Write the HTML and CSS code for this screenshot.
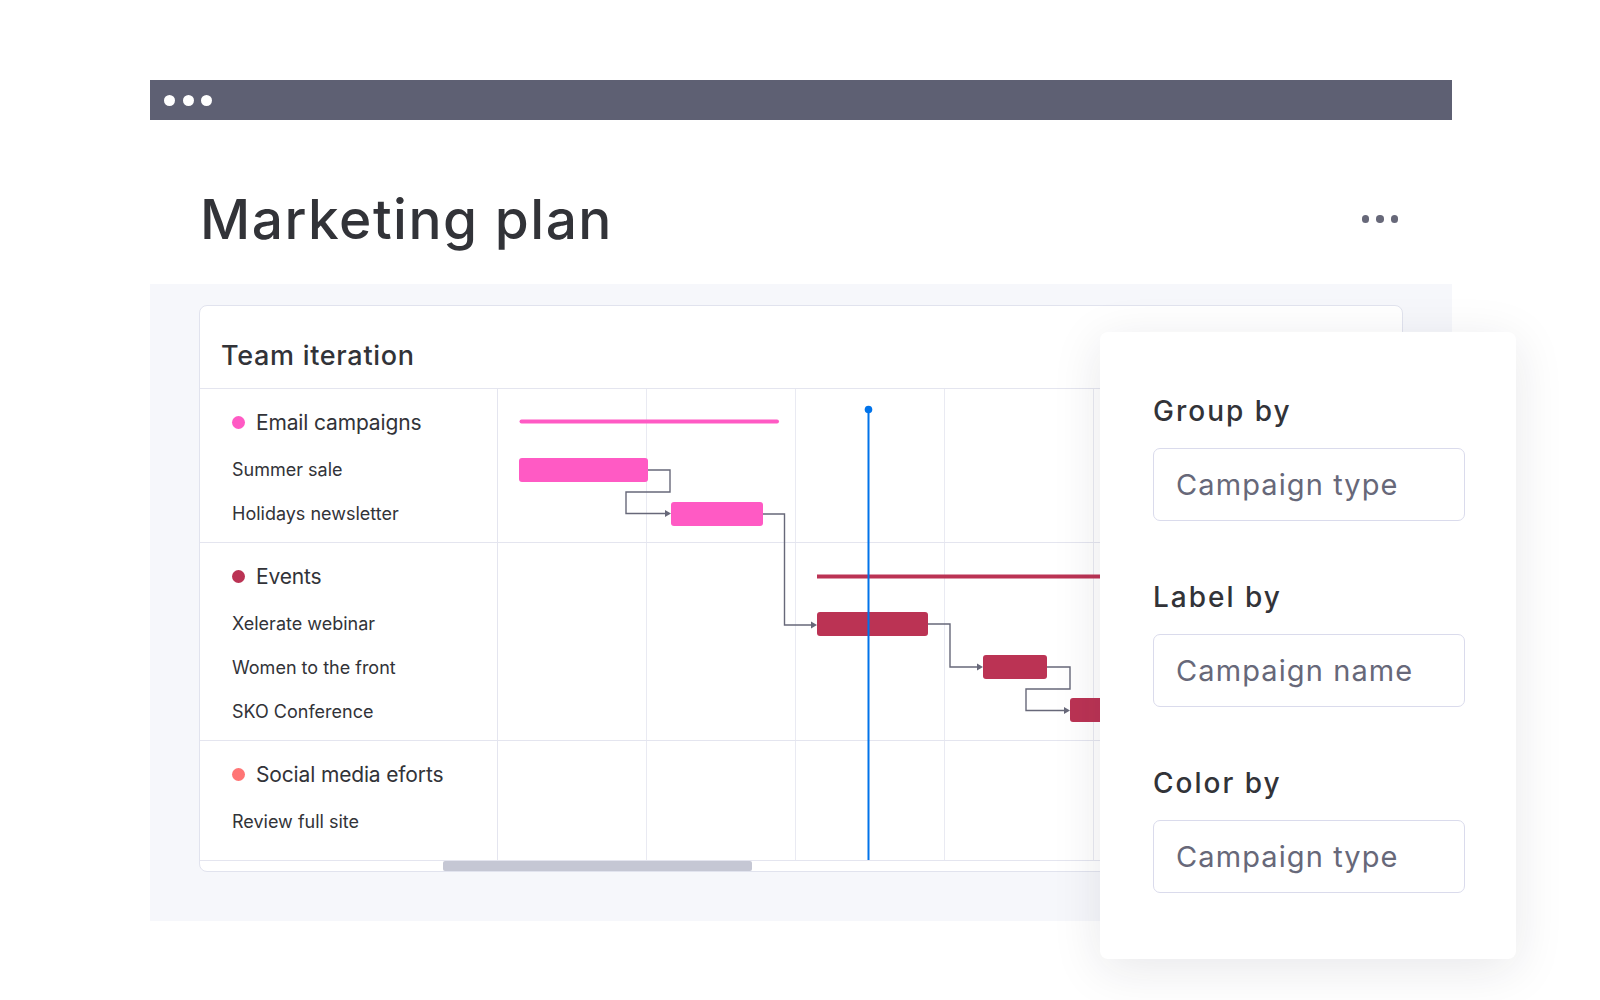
FILE: index.html
```html
<!DOCTYPE html>
<html lang="en">
<head>
    <meta charset="UTF-8">
    <meta name="viewport" content="width=device-width, initial-scale=1.0">
    <title>Marketing plan</title>
    <link rel="stylesheet" href="styles.css">
</head>
<body>
<div class="page">

    <div class="window">
        <div class="window-bar">
            <span></span><span></span><span></span>
        </div>

        <div class="board-head">
            <h1>Marketing plan</h1>
            <div class="more"><span></span><span></span><span></span></div>
        </div>

        <div class="board">
            <div class="card">
                <div class="card-head">Team iteration</div>

                <div class="gantt">
                    <div class="group">
                        <div class="labels">
                            <div class="group-name"><span class="bullet pink"></span>Email campaigns</div>
                            <div class="item">Summer sale</div>
                            <div class="item">Holidays newsletter</div>
                        </div>
                        <div class="timeline"></div>
                    </div>
                    <div class="group group-events">
                        <div class="labels">
                            <div class="group-name"><span class="bullet crimson"></span>Events</div>
                            <div class="item">Xelerate webinar</div>
                            <div class="item">Women to the front</div>
                            <div class="item">SKO Conference</div>
                        </div>
                        <div class="timeline"></div>
                    </div>
                    <div class="group group-social">
                        <div class="labels">
                            <div class="group-name"><span class="bullet coral"></span>Social media eforts</div>
                            <div class="item">Review full site</div>
                        </div>
                        <div class="timeline"></div>
                    </div>

                    <!-- bars, dependencies and the today marker -->
                    <svg class="bars" width="906" height="471" viewBox="0 0 906 471">
                        <line x1="24.5" y1="32.5" x2="280" y2="32.5" stroke="#ff5ac4" stroke-width="4" stroke-linecap="round"/>
                        <rect x="22" y="69" width="129" height="24" rx="3" fill="#ff5ac4"/>
                        <path d="M151 81H173V103H129V124.5H168" fill="none" stroke="#676879" stroke-width="1.4"/>
                        <path d="M168 121L174 124.5L168 128Z" fill="#676879"/>
                        <rect x="174" y="113" width="92" height="24" rx="3" fill="#ff5ac4"/>
                        <path d="M266 125H287.5V236H314" fill="none" stroke="#676879" stroke-width="1.4"/>
                        <path d="M314 232.5L320 236L314 239.5Z" fill="#676879"/>

                        <line x1="320" y1="187.5" x2="906" y2="187.5" stroke="#bb3354" stroke-width="4"/>
                        <rect x="320" y="223" width="111" height="24" rx="3" fill="#bb3354"/>
                        <path d="M431 235H453V278H480" fill="none" stroke="#676879" stroke-width="1.4"/>
                        <path d="M480 274.5L486 278L480 281.5Z" fill="#676879"/>
                        <rect x="486" y="266" width="64" height="24" rx="3" fill="#bb3354"/>
                        <path d="M550 278H573V300H529V321.5H567" fill="none" stroke="#676879" stroke-width="1.4"/>
                        <path d="M567 318L573 321.5L567 325Z" fill="#676879"/>
                        <rect x="573" y="309" width="150" height="24" rx="3" fill="#bb3354"/>

                        <line x1="371.5" y1="20" x2="371.5" y2="471" stroke="#0073ea" stroke-width="2"/>
                        <circle cx="371.5" cy="20.5" r="3.8" fill="#0073ea"/>
                    </svg>
                </div>

                <div class="scroll"><div class="thumb"></div></div>
            </div>
        </div>
    </div>

    <aside class="settings">
        <div class="field">
            <div class="field-label">Group by</div>
            <div class="field-box">Campaign type</div>
        </div>
        <div class="field">
            <div class="field-label">Label by</div>
            <div class="field-box">Campaign name</div>
        </div>
        <div class="field">
            <div class="field-label">Color by</div>
            <div class="field-box">Campaign type</div>
        </div>
    </aside>

</div>
</body>
</html>
```

FILE: styles.css
```css
:root {
    --text-color: #323338;
    --muted-color: #676879;
    --line-color: #e4e5ef;
    --pink: #ff5ac4;
    --crimson: #bb3354;
    --coral: #ff7575;
}

body {
    margin: 0;
    background: #ffffff;
    font-family: "Inter", "Noto Sans", sans-serif;
    color: var(--text-color);
}

.page {
    position: relative;
    width: 1600px;
    height: 1000px;
    overflow: hidden;
}

.window {
    width: 1302px;
    margin-left: 150px;
    padding-top: 80px;
}

.window-bar {
    height: 40px;
    background: #5e6073;
    display: flex;
    align-items: center;
    gap: 7.5px;
    padding-left: 14px;
}

.window-bar span {
    width: 11px;
    height: 11px;
    border-radius: 50%;
    background: #ffffff;
}

.board-head {
    height: 164px;
    display: flex;
    justify-content: space-between;
    align-items: flex-start;
    padding: 0 54px 0 50px;
}

.board-head h1 {
    margin: 72px 0 0;
    font-size: 55px;
    line-height: 1;
    font-weight: 500;
    letter-spacing: 1.5px;
}

.more {
    display: flex;
    gap: 7px;
    margin-top: 95px;
}

.more span {
    width: 7.5px;
    height: 7.5px;
    border-radius: 50%;
    background: var(--muted-color);
}

.board {
    background: #f6f7fb;
    padding: 21px 49px 49px;
}

.card {
    background: #ffffff;
    border: 1px solid #e1e3ee;
    border-radius: 8px;
    overflow: hidden;
}

.card-head {
    box-sizing: border-box;
    height: 83px;
    padding: 33px 0 0 21px;
    font-size: 27px;
    line-height: 34px;
    font-weight: 500;
    letter-spacing: 0.7px;
    border-bottom: 1px solid var(--line-color);
}

.gantt {
    position: relative;
}

.group {
    box-sizing: border-box;
    height: 154px;
    display: grid;
    grid-template-columns: 298px 1fr;
    border-bottom: 1px solid var(--line-color);
}

.group-events {
    height: 198px;
}

.group-social {
    height: 120px;
}

.labels {
    padding: 19px 0 0 32px;
    border-right: 1px solid var(--line-color);
}

.group-name {
    height: 28px;
    display: flex;
    align-items: center;
    gap: 11px;
    margin-bottom: 11px;
    font-size: 21px;
    letter-spacing: -0.15px;
}

.bullet {
    width: 13px;
    height: 13px;
    border-radius: 50%;
}

.pink { background: var(--pink); }
.crimson { background: var(--crimson); }
.coral { background: var(--coral); }

.item {
    height: 44px;
    display: flex;
    align-items: center;
    font-size: 18px;
}

.timeline {
    background-image: repeating-linear-gradient(to right, transparent 0 148px, #e9eaf2 148px 149px);
}

.bars {
    position: absolute;
    left: 297px;
    top: 0;
}

.scroll {
    height: 10px;
}

.scroll .thumb {
    width: 309px;
    height: 10px;
    margin-left: 243px;
    background: #c5c7d4;
    border-radius: 2px;
}

.settings {
    position: absolute;
    left: 1100px;
    top: 332px;
    box-sizing: border-box;
    width: 416px;
    height: 627px;
    padding: 61px 0 0 53px;
    background: #ffffff;
    border-radius: 8px;
    box-shadow: 0 10px 50px rgba(29, 30, 50, 0.1);
}

.field + .field {
    margin-top: 58px;
}

.field-label {
    font-size: 28px;
    line-height: 36px;
    font-weight: 500;
    letter-spacing: 2px;
    margin-bottom: 19px;
}

.field-box {
    box-sizing: border-box;
    width: 312px;
    height: 73px;
    display: flex;
    align-items: center;
    padding-left: 22px;
    border: 1.5px solid #dadbec;
    border-radius: 7px;
    font-size: 29px;
    letter-spacing: 1.1px;
    color: var(--muted-color);
}
```
